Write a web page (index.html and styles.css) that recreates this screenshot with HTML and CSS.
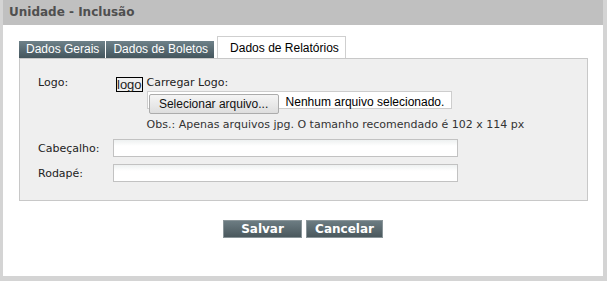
FILE: index.html
```html
<!DOCTYPE html>
<html lang="pt-BR">
<head>
    <meta charset="UTF-8">
    <title>Unidade - Inclusão</title>
    <link rel="stylesheet" href="styles.css">
</head>
<body>
    <div class="window">
        <div class="title">Unidade - Inclusão</div>

        <div class="tabs">
            <div class="tab">Dados Gerais</div>
            <div class="tab">Dados de Boletos</div>
            <div class="tab active">Dados de Relatórios</div>
        </div>

        <div class="panel">
            <div class="row logo-row">
                <label class="label">Logo:</label>
                <div class="logo-field">
                    <span class="logo-img">logo</span>
                    <div class="upload">
                        <div>Carregar Logo:</div>
                        <div class="file">
                            <span class="file-btn">Selecionar arquivo...</span>
                            <span class="file-name">Nenhum arquivo selecionado.</span>
                        </div>
                        <div class="obs">Obs.: Apenas arquivos jpg. O tamanho recomendado é 102 x 114 px</div>
                    </div>
                </div>
            </div>
            <div class="row">
                <label class="label">Cabeçalho:</label>
                <input class="text" type="text">
            </div>
            <div class="row">
                <label class="label">Rodapé:</label>
                <input class="text" type="text">
            </div>
        </div>

        <div class="actions">
            <button class="btn btn-salvar">Salvar</button>
            <button class="btn btn-cancelar">Cancelar</button>
        </div>
    </div>
</body>
</html>
```

FILE: styles.css
```css
body {
    margin: 0;
    background: #d4d4d4;
    font-family: "DejaVu Sans", Verdana, sans-serif;
    font-size: 11px;
    color: #222;
}

.window {
    margin: 0 4px 0 3px;
    height: 276px;
    background: #fff;
}

.title {
    height: 25px;
    line-height: 25px;
    padding-left: 6px;
    background: #c0c0c0;
    color: #4f4f4f;
    font-size: 12px;
    font-weight: bold;
}

.tabs {
    display: flex;
    align-items: flex-end;
    gap: 1px;
    margin: 11px 0 0 16px;
    font-family: "Liberation Sans", Arial, sans-serif;
    font-size: 12px;
}

.tab {
    height: 17px;
    line-height: 17px;
    padding: 0 6px 0 7px;
    color: #fff;
    background: linear-gradient(#6e8189, #44565d);
}

.tab.active {
    height: 21px;
    line-height: 23px;
    margin-left: 2px;
    padding: 0 6px 0 12px;
    color: #000;
    background: #fff;
    border: 1px solid #cfcfcf;
    border-bottom: none;
}

.panel {
    margin: 0 15px 0 16px;
    padding: 17px 0 18px 18px;
    background: #efefef;
    border: 1px solid #c8c8c8;
}

.row {
    display: flex;
    align-items: center;
    margin-top: 7px;
}

.row.logo-row {
    align-items: flex-start;
    margin-top: 0;
}

.label {
    width: 75px;
    line-height: 13px;
}

.logo-field {
    display: flex;
    align-items: flex-start;
    gap: 4px;
    margin-left: 3px;
}

.logo-img {
    margin-top: 1px;
    border: 1px solid #000;
    font-family: "Liberation Sans", Arial, sans-serif;
    font-size: 13px;
    line-height: 13px;
}

.upload {
    line-height: 13px;
}

.file {
    display: flex;
    align-items: flex-start;
    width: 303px;
    height: 16px;
    margin-top: 2px;
    background: #fff;
    border: 1px solid #cdcdcd;
    font-family: "Liberation Sans", Arial, sans-serif;
    font-size: 12px;
}

.file-btn {
    flex: none;
    box-sizing: border-box;
    width: 130px;
    height: 20px;
    margin: 2px 0 0 1px;
    line-height: 18px;
    text-align: center;
    color: #111;
    background: linear-gradient(#f5f5f5, #dedede);
    border: 1px solid #acacac;
    border-radius: 2px;
}

.file-name {
    margin: 4px 0 0 7px;
    color: #000;
}

.obs {
    margin-top: 9px;
    color: #333;
}

.text {
    box-sizing: border-box;
    width: 345px;
    height: 18px;
    margin: 0;
    border: 1px solid #c2c2c2;
    background: linear-gradient(#eef1f1, #fff 6px);
}

.row + .row {
    margin-top: 7px;
}

.logo-row + .row {
    margin-top: 8px;
}

.actions {
    display: flex;
    justify-content: center;
    gap: 4px;
    margin-top: 19px;
}

.btn {
    box-sizing: border-box;
    height: 18px;
    padding: 0;
    color: #fff;
    font-family: "DejaVu Sans", Verdana, sans-serif;
    font-size: 12px;
    font-weight: bold;
    line-height: 16px;
    background: linear-gradient(#6c7c82, #4a585d);
    border: 1px solid #8a9599;
}

.btn-salvar {
    width: 79px;
}

.btn-cancelar {
    width: 77px;
}
```
